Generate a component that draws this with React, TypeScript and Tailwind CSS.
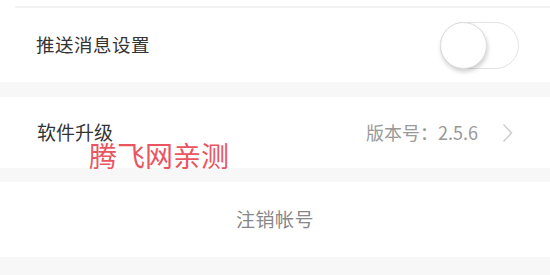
import { useState } from "react";

const font = { fontFamily: '"Noto Sans CJK SC", "Noto Sans", sans-serif' };

export default function App() {
  const [push, setPush] = useState(false);

  return (
    <div className="w-[550px] h-[275px] bg-[#f7f7f7] overflow-hidden" style={font}>
      {/* tail of the row above */}
      <div className="bg-white h-[8px] flex flex-col justify-end">
        <div className="ml-[15px] h-[2px] bg-[#f3f3f3]" />
      </div>

      {/* push setting */}
      <div className="bg-white h-[74px] flex items-center justify-between pl-[36px] pr-[31px]">
        <span className="text-[18.5px] text-[#333] tracking-[0.5px]">推送消息设置</span>
        <button
          onClick={() => setPush(!push)}
          className="relative w-[79px] h-[47px] rounded-full border border-[#e3e3e3] bg-white"
        >
          <span className="absolute left-[-1px] top-[-1px] w-[47px] h-[47px] rounded-full bg-white border border-[#dcdcdc] shadow-[1px_3px_4px_rgba(0,0,0,0.18)]" />
        </button>
      </div>

      <div className="h-[15px]" />

      {/* software upgrade */}
      <div className="relative bg-white h-[71px] flex items-center justify-between pl-[37px] pr-[37px]">
        <span className="text-[19px] text-[#333]">软件升级</span>
        <div className="flex items-center gap-[24px]">
          <span className="text-[18px] text-[#999]">版本号：2.5.6</span>
          <svg width="11" height="20" viewBox="0 0 11 20" fill="none">
            <path d="M1.5 1.5 L9.5 10 L1.5 18.5" stroke="#cfcfcf" strokeWidth="1.6" />
          </svg>
        </div>
        <span className="absolute left-[89px] top-[42px] text-[28px] leading-[32px] text-[#ea5560]">腾飞网亲测</span>
      </div>

      <div className="h-[14px]" />

      {/* cancel account */}
      <div className="bg-white h-[75px] flex items-center justify-center">
        <span className="text-[19px] text-[#888] tracking-[0.5px]">注销帐号</span>
      </div>
    </div>
  );
}
